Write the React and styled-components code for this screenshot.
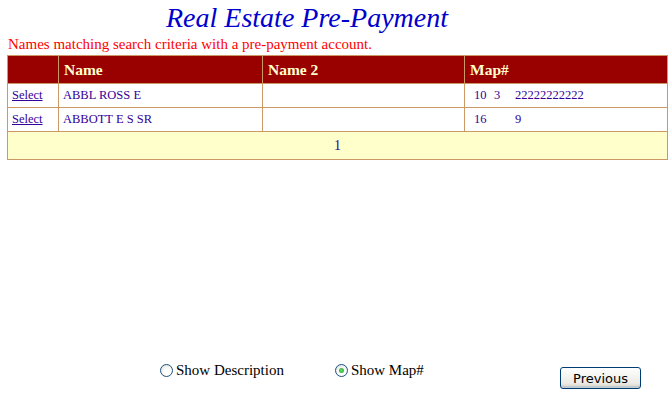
import React, { useState } from 'react'
import styled, { createGlobalStyle } from 'styled-components'

const GlobalStyle = createGlobalStyle`
	html, body {
		margin: 0;
		padding: 0;
		background: #fff;
	}
	body {
		font-family: 'Liberation Serif', 'Times New Roman', serif;
	}
`

const rows = [
	{ name: 'ABBL ROSS E', name2: '', map: ['10', '3', '22222222222'] },
	{ name: 'ABBOTT E S SR', name2: '', map: ['16', '', '9'] },
]

const App = () => {
	const [mode, setMode] = useState('map')

	return (
		<Page>
			<GlobalStyle />
			<Title>Real Estate Pre-Payment</Title>
			<Message>Names matching search criteria with a pre-payment account.</Message>
			<Grid>
				<colgroup>
					<col style={{ width: 51 }} />
					<col style={{ width: 204 }} />
					<col style={{ width: 202 }} />
					<col style={{ width: 203 }} />
				</colgroup>
				<thead>
					<tr>
						<HeadCell />
						<HeadCell>Name</HeadCell>
						<HeadCell>Name 2</HeadCell>
						<HeadCell>Map#</HeadCell>
					</tr>
				</thead>
				<tbody>
					{rows.map((r) => (
						<tr key={r.name}>
							<Cell>
								<SelectLink href='#'>Select</SelectLink>
							</Cell>
							<Cell>{r.name}</Cell>
							<Cell>{r.name2}</Cell>
							<Cell>
								<MapNo>
									<span>{r.map[0]}</span>
									<span>{r.map[1]}</span>
									<span>{r.map[2]}</span>
								</MapNo>
							</Cell>
						</tr>
					))}
					<tr>
						<Pager colSpan={4}>1</Pager>
					</tr>
				</tbody>
			</Grid>
			<Footer>
				<Options>
					<Option onClick={() => setMode('desc')}>
						<Radio checked={mode === 'desc'} />
						Show Description
					</Option>
					<Option onClick={() => setMode('map')}>
						<Radio checked={mode === 'map'} />
						Show Map#
					</Option>
				</Options>
				<Button>Previous</Button>
			</Footer>
		</Page>
	)
}

export default App

const Page = styled.div`
	width: 672px;
	height: 396px;
	display: flex;
	flex-direction: column;
	box-sizing: border-box;
	padding: 0 5px 0 7px;
`

const Title = styled.h1`
	margin: 3px 0 0;
	padding-right: 60px;
	text-align: center;
	font-family: 'Liberation Serif', 'Times New Roman', serif;
	font-style: italic;
	font-weight: normal;
	font-size: 28px;
	line-height: 30px;
	color: #0000cc;
`

const Message = styled.div`
	margin-left: 1px;
	padding-top: 3px;
	font-size: 15px;
	line-height: 17px;
	color: #ff0000;
	height: 20px;
`

const Grid = styled.table`
	width: 660px;
	border-collapse: collapse;
	table-layout: fixed;
	border: 1px solid #cc9966;
	margin-top: -1px;
`

const HeadCell = styled.th`
	height: 27px;
	padding: 0 5px;
	background: #990000;
	color: #ffffcc;
	font-size: 15.5px;
	line-height: 18px;
	font-weight: bold;
	text-align: left;
	border: 1px solid #cc9966;
	border-top: none;
`

const Cell = styled.td`
	height: 23px;
	padding: 0 4px;
	font-size: 12.5px;
	line-height: 15px;
	color: #330099;
	border: 1px solid #cc9966;
	vertical-align: middle;
	white-space: nowrap;
`

const SelectLink = styled.a`
	color: #330099;
	text-decoration: underline;
`

const MapNo = styled.span`
	display: inline-flex;
	padding-left: 5px;
	span:nth-child(1) {
		width: 20px;
	}
	span:nth-child(2) {
		width: 21px;
	}
`

const Pager = styled.td`
	height: 25px;
	background: #ffffcc;
	text-align: center;
	color: #330099;
	font-size: 14px;
	line-height: 16px;
	border: 1px solid #cc9966;
`

const Footer = styled.div`
	margin-top: auto;
	height: 36px;
	display: flex;
	align-items: flex-start;
	padding-left: 153px;
`

const Options = styled.div`
	display: flex;
	gap: 51px;
	margin-top: 2px;
`

const Option = styled.label`
	display: flex;
	align-items: center;
	gap: 3px;
	font-size: 15px;
	line-height: 17px;
	color: #000;
	cursor: pointer;
`

const Radio = styled.span`
	width: 11px;
	height: 11px;
	border-radius: 50%;
	border: 1px solid #1c5180;
	background: radial-gradient(circle at 60% 65%, #ffffff 30%, #dcdcd6 100%);
	position: relative;
	flex: none;
	&::after {
		content: '';
		display: ${(p) => (p.checked ? 'block' : 'none')};
		position: absolute;
		left: 3px;
		top: 3px;
		width: 5px;
		height: 5px;
		border-radius: 50%;
		background: radial-gradient(circle, #5fe06a 0%, #21a121 100%);
	}
`

const Button = styled.button`
	margin-left: auto;
	margin-top: 7px;
	margin-right: 26px;
	width: 81px;
	height: 22px;
	border: 1px solid #003c74;
	border-radius: 3px;
	background: linear-gradient(#ffffff 0%, #f4f4f0 40%, #ecebe6 75%, #d6d0c5 100%);
	box-shadow: inset 0 -2px 0 #c1ccd1;
	font-family: Tahoma, 'DejaVu Sans', 'Liberation Sans', sans-serif;
	font-size: 13px;
	color: #000;
	padding: 0;
	cursor: pointer;
`
